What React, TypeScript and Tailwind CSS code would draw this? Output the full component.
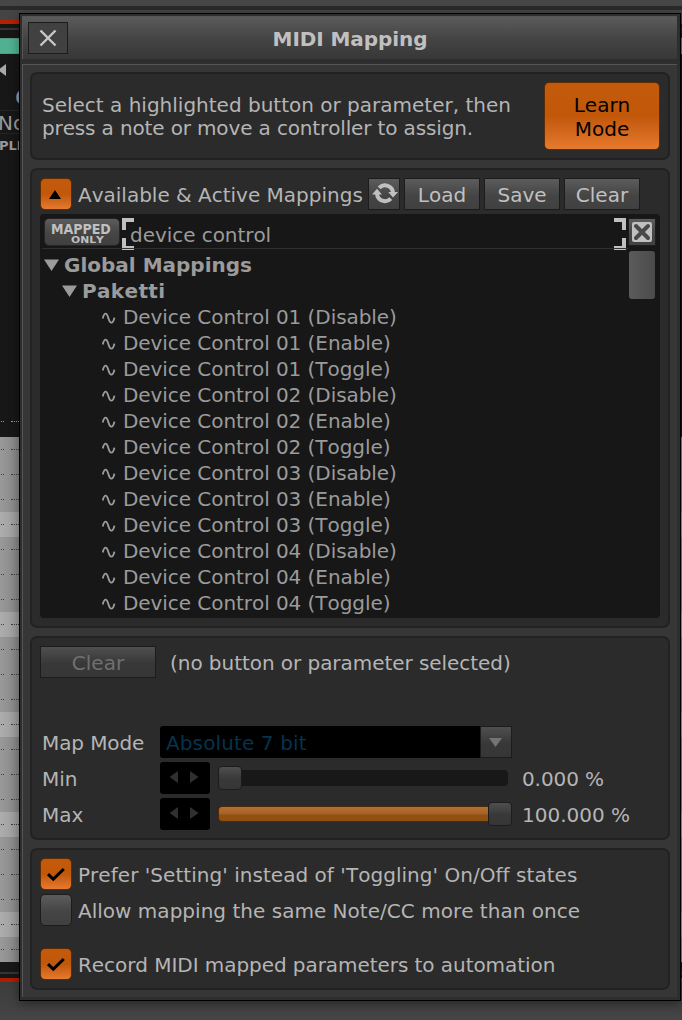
import type { ReactNode } from 'react';

const raised = 'bg-linear-to-b from-[#5c5c5c] via-[#454545] via-55% to-[#404040]';
const raisedDim = 'bg-linear-to-b from-[#4f4f4f] via-[#383838] via-55% to-[#363636]';
const lit = 'bg-linear-to-b from-[#c35a0c] via-[#c05709] via-50% to-[#e67a2d]';

const devices = ['01', '02', '03', '04'];
const actions = ['Disable', 'Enable', 'Toggle'];
const mappings = devices.flatMap((d) => actions.map((a) => `Device Control ${d} (${a})`));

function Panel({ className, children }: { className: string; children: ReactNode }) {
  return (
    <section className={`rounded-[7px] border-2 border-[#222222] bg-[#2b2b2b] ${className}`}>{children}</section>
  );
}

function ToolButton({ className, children }: { className: string; children: ReactNode }) {
  return (
    <button className={`flex h-8 shrink-0 items-center justify-center border border-[#1c1c1c] text-[#c0c0c0] ${raised} ${className}`}>
      {children}
    </button>
  );
}

function Check({ on, label, className = '' }: { on: boolean; label: string; className?: string }) {
  return (
    <label className="flex h-8 items-center">
      <span className={`flex size-8 shrink-0 items-center justify-center rounded-[5px] border ${on ? 'border-[#5a2c08]' : 'border-[#1c1c1c]'} ${on ? lit : raised}`}>
        {on && (
          <svg width="20" height="18" viewBox="0 0 20 18" fill="none" stroke="#000" strokeWidth="3">
            <path d="M2 9.2 L7.3 14.2 L17.8 4" />
          </svg>
        )}
      </span>
      <span className={`ml-1.5 whitespace-nowrap pt-px ${className}`}>{label}</span>
    </label>
  );
}

function Stepper() {
  return (
    <span className="flex h-8 w-[50px] items-center justify-center rounded-[3px] bg-black pb-[2px]">
      <svg width="30" height="12" viewBox="0 0 30 12" fill="#303030">
        <path d="M8 0V12L-0.5 6ZM20 0V12L28.5 6Z" />
      </svg>
    </span>
  );
}

function Backdrop() {
  return (
    <div className="flex h-[1020px] flex-col bg-[#454545]">
      <div className="h-[6px] bg-[#464646]" />
      <div className="h-[4px] bg-[#2a2a2a]" />
      <div className="h-[10px] bg-[#444444]" />
      <div className="h-[4px] bg-[#b82000]" />
      <div className="flex h-[413px] flex-col bg-[#171717]">
        <div className="mt-[4px] h-[2px] bg-[#343434]" />
        <div className="mt-[8px] flex h-[16px] justify-between border-y border-[#59977f] bg-[#a34b8b]">
          <div className="w-[340px] bg-[#50b092]" />
        </div>
        <div className="mt-[8px] flex h-[15px] items-center">
          <svg width="6" height="12" viewBox="0 0 6 12" fill="#a8a8a8"><path d="M6 0V12L-2 6Z" /></svg>
        </div>
        <div className="h-[33px] pl-[15px] text-[20px] font-bold leading-[40px] text-[#999999]">6</div>
        <div className="h-[24px] border-y border-[#252525] text-[20px] leading-[24px] text-[#999999]"><span className="-ml-[2px]">No</span></div>
        <div className="h-[22px] text-[13px] font-bold leading-[23px] text-[#999999]"><span className="-ml-px">PLI</span></div>
        <div className="mt-[265px] flex gap-[7px] pl-px">
          <div className="w-[3px] border-t border-dotted border-[#999999]" />
          <div className="w-[8px] border-t border-dotted border-[#999999]" />
        </div>
      </div>
      <div className="h-[525px] overflow-hidden bg-[#929292]">
        {Array.from({ length: 21 }, (_, i) => (
          <div key={i} className={`flex h-[25px] gap-[7px] pl-px pt-[12px] ${i % 4 === 3 ? 'bg-linear-to-r from-[#adadad] from-0% to-[#9b9b9b] to-[20px]' : 'bg-linear-to-r from-[#999999] from-0% to-[#858585] to-[20px]'}`}>
            <div className="h-px w-[3px] border-t border-dotted border-[#3d3d3d]" />
            <div className="h-px w-[8px] border-t border-dotted border-[#3d3d3d]" />
          </div>
        ))}
      </div>
      <div className="h-[10px] bg-[#171717]" />
      <div className="h-[2px] bg-[#343434]" />
      <div className="h-[4px] bg-[#171717]" />
      <div className="h-[4px] bg-[#b01d00]" />
      <div className="grow bg-linear-to-b from-[#3c3c3c] to-[#454545]" />
    </div>
  );
}

export default function App() {
  return (
    <main className="relative h-[1020px] w-[682px] overflow-hidden font-['DejaVu_Sans',sans-serif] text-[20px] text-[#b5b5b5] [font-kerning:none]">
      <Backdrop />
      <div role="dialog" className="absolute left-[19px] top-[13px] flex h-[988px] w-[662px] flex-col border border-black bg-[#2e2e2e] pb-[3px] pl-[2px] pr-[3px] pt-[2px] shadow-[0_3px_10px_#00000060]">
        <header className="flex h-[43px] items-center border-l border-t border-[#555555] bg-linear-to-b from-[#5b5b5b] via-[#434343] via-55% to-[#383838]">
          <button aria-label="Close" className="ml-[5px] flex h-8 w-10 items-center justify-center border border-[#1c1c1c] bg-[#414141]">
            <svg width="18" height="18" viewBox="0 0 18 18" stroke="#c8c8c8" strokeWidth="2.4"><path d="M1.5 1.5L16.5 16.5M16.5 1.5L1.5 16.5" /></svg>
          </button>
          <h1 className="mr-[45px] flex-1 pt-[2px] text-center font-bold tracking-[-0.08px] text-[#c0c0c0]">MIDI Mapping</h1>
        </header>
        <div className="mt-[5px] flex flex-1 flex-col gap-2 border-l border-t border-[#555555] bg-[#363636] pl-[7px] pr-[7px] pt-[7px]">
          <Panel className="flex h-[88px] items-center justify-between pl-[10px] pr-[8px]">
            <p className="whitespace-nowrap pt-px leading-[23px]">
              Select a highlighted button or parameter, then
              <br />
              <span className="tracking-[-0.14px]">press a note or move a controller to assign.</span>
            </p>
            <button className={`h-[68px] w-[116px] shrink-0 rounded-[5px] border border-[#5a2c08] pt-[2px] leading-[24px] text-black ${lit}`}>
              Learn
              <br />
              Mode
            </button>
          </Panel>

          <Panel className="h-[460px] px-[8px] pt-[8px]">
            <div className="flex h-8 items-center">
              <button aria-label="Collapse" className={`flex size-8 shrink-0 items-center justify-center rounded-[5px] border border-[#5a2c08] ${lit}`}>
                <svg width="12" height="9" viewBox="0 0 12 9" fill="#000" className="mr-[2px]"><path d="M6 0L12 9H0Z" /></svg>
              </button>
              <span className="ml-[6px] w-[290px] shrink-0 whitespace-nowrap pt-px">Available &amp; Active Mappings</span>
              <ToolButton className="w-8">
                <svg width="27" height="22" viewBox="0 0 27 22" fill="none" stroke="#c0c0c0" strokeWidth="4" className="shrink-0">
                  <path d="M8.2 4.9A8 8 0 0 1 22 10M19.8 15.6A8 8 0 0 1 6 10.6" />
                  <path d="M1 11.5H11L6 5.8ZM17.2 9H27L22 14.6Z" fill="#c0c0c0" stroke="none" />
                </svg>
              </ToolButton>
              <ToolButton className="ml-1 w-[76px] pt-[2px]">Load</ToolButton>
              <ToolButton className="ml-1 w-[76px] pt-[2px]">Save</ToolButton>
              <ToolButton className="ml-1 w-[76px] pt-[2px]">Clear</ToolButton>
            </div>
            <div className="mt-[4px] h-[404px] w-[620px] rounded-[4px] bg-[#171717] text-[#9b9b9b]">
              <div className="flex h-[34px] pl-[4px] pt-[4px]">
                <button className={`flex h-[28px] w-[76px] shrink-0 flex-col items-start rounded-[5px] border border-[#252525] font-bold text-[#c0c0c0] ${raised}`}>
                  <span className="ml-[6px] mt-[3px] origin-left scale-x-[0.9] text-[14px] leading-[14px]">MAPPED</span>
                  <span className="ml-[26px] origin-left scale-x-[1.2] text-[9px] leading-[9px]">ONLY</span>
                </button>
                <div className="ml-[2px] -mt-px flex h-8 w-[504px] justify-between">
                  <svg width="12" height="32" viewBox="0 0 12 32" fill="none" stroke="#c0c0c0" strokeWidth="4" className="mt-px shrink-0"><path d="M12 2H2V12M2 20V30H12" /></svg>
                  <span className="-ml-[4px] flex-1 whitespace-nowrap leading-[37px] tracking-[-0.05px]">device control</span>
                  <svg width="12" height="32" viewBox="0 0 12 32" fill="none" stroke="#c0c0c0" strokeWidth="4" className="mt-px shrink-0"><path d="M0 2H10V12M10 20V30H0" /></svg>
                </div>
                <button aria-label="Clear filter" className={`ml-[2px] flex h-[28px] w-[28px] items-center justify-center border border-[#1c1c1c] ${raised}`}>
                  <svg width="20" height="20" viewBox="0 0 20 20"><rect width="20" height="20" rx="2" fill="#c0c0c0" /><path d="M4 4L16 16M16 4L4 16" stroke="#484848" strokeWidth="4" strokeLinecap="round" /></svg>
                </button>
              </div>
              <div className="flex pl-[2px]">
                <ul className="w-[586px] border-t border-[#303030] pt-[3px] leading-[26px]">
                  <li className="flex h-[26px] items-center font-bold">
                    <svg width="15" height="12" viewBox="0 0 15 12" className="ml-[2px] mr-[5px]" fill="#9b9b9b"><path d="M0 0.5H15L7.5 12Z" /></svg>
                    Global Mappings
                  </li>
                  <li className="flex h-[26px] items-center font-bold tracking-[0.35px]">
                    <svg width="15" height="12" viewBox="0 0 15 12" className="ml-[20px] mr-[5px]" fill="#9b9b9b"><path d="M0 0.5H15L7.5 12Z" /></svg>
                    Paketti
                  </li>
                  {mappings.map((m) => (
                    <li key={m} className="flex h-[26px] items-center whitespace-nowrap tracking-[-0.06px]">
                      <svg width="14" height="12" viewBox="0 0 14 12" className="ml-[60px] mr-[7px] mt-px" fill="none" stroke="#9b9b9b" strokeWidth="1.9"><path d="M0.7 6.5C1.2 4.5 2.2 1.6 3.7 1.6C6.4 1.6 6.3 10.6 9.3 10.6C11 10.6 11.9 8.2 12.4 5.6" /></svg>
                      {m}
                    </li>
                  ))}
                </ul>
                <div className="ml-px mt-[3px] h-[48px] w-[26px] rounded-[3px] bg-linear-to-r from-[#5b5b5b] to-[#4b4b4b]" />
              </div>
            </div>
          </Panel>

          <Panel className="h-[204px] px-[8px] pt-[8px]">
            <div className="flex h-8 items-center">
              <button className={`h-8 w-[116px] border border-[#1c1c1c] pt-px text-[#707070] ${raisedDim}`}>Clear</button>
              <span className="ml-[14px] whitespace-nowrap pt-px tracking-[-0.05px]">(no button or parameter selected)</span>
            </div>
            <div className="mt-[48px] flex flex-col gap-1">
              <div className="flex h-8 items-center">
                <span className="w-[120px] pl-[2px] pt-px tracking-[-0.1px]">Map Mode</span>
                <span className="h-8 w-[320px] rounded-l-[3px] bg-black pl-[6px] leading-[35px] tracking-[0.12px] text-[#05334e]">Absolute 7 bit</span>
                <span className={`flex h-8 w-8 items-center justify-center border border-[#1c1c1c] ${raisedDim}`}>
                  <svg width="13" height="9" viewBox="0 0 13 9" fill="#747474" className="mr-[2px]"><path d="M0 0H13L6.5 9Z" /></svg>
                </span>
              </div>
              <div className="flex h-8 items-center">
                <span className="w-[120px] pl-[2px] pt-px">Min</span>
                <Stepper />
                <span className="ml-[8px] flex h-4 w-[290px] items-center rounded-[4px] bg-[#181818]">
                  <span className={`h-6 w-6 rounded-[4px] border border-[#1c1c1c] ${raisedDim}`} />
                </span>
                <span className="ml-[14px] whitespace-nowrap pt-px tracking-[-0.1px]">0.000 %</span>
              </div>
              <div className="flex h-8 items-center">
                <span className="w-[120px] pl-[2px] pt-px">Max</span>
                <Stepper />
                <span className="ml-[8px] mr-[-4px] flex h-4 w-[294px] items-center rounded-[4px] bg-[#181818]">
                  <span className="h-4 flex-1 rounded-l-[4px] border border-r-0 border-[#4c2a0c] bg-linear-to-b from-[#b5702f] from-0% via-[#a7642a] via-45% to-[#92500f] to-60%" />
                  <span className={`h-6 w-6 rounded-[4px] border border-[#1c1c1c] ${raisedDim}`} />
                </span>
                <span className="ml-[14px] whitespace-nowrap pt-px">100.000 %</span>
              </div>
            </div>
          </Panel>

          <Panel className="h-[142px] px-[8px] pt-[8px]">
            <Check on label="Prefer 'Setting' instead of 'Toggling' On/Off states" className="tracking-[0.04px]" />
            <div className="mt-1"><Check on={false} label="Allow mapping the same Note/CC more than once" className="tracking-[0.02px]" /></div>
            <div className="mt-[22px]"><Check on label="Record MIDI mapped parameters to automation" className="tracking-[-0.06px]" /></div>
          </Panel>
        </div>
      </div>
    </main>
  );
}
